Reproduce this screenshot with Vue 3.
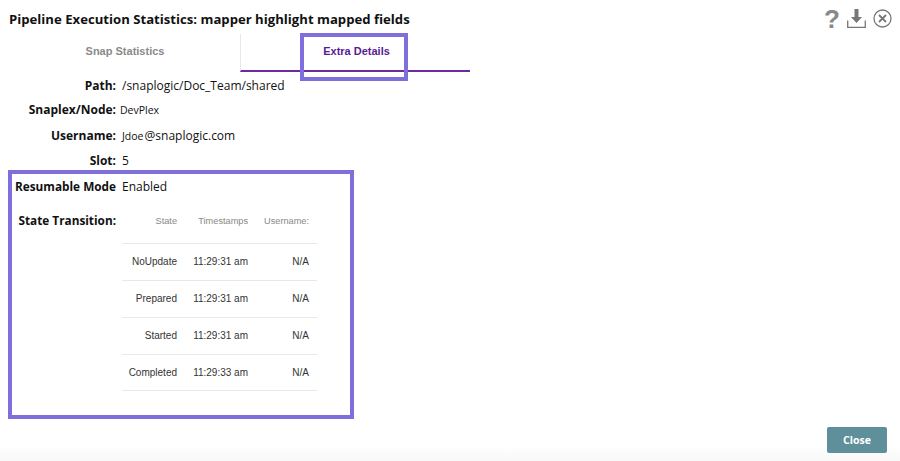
<template>
  <div class="dialog">
    <h1 class="title">Pipeline Execution Statistics: mapper highlight mapped fields</h1>

    <div class="actions">
      <span class="help">?</span>
      <svg class="icon" width="19" height="19" viewBox="0 0 19 19">
        <path d="M7.500 0h4v8h3.500L9.500 14 4 8h3.500z" fill="#777" />
        <path d="M.7 11.500v6.800h17.600v-6.800" fill="none" stroke="#777" stroke-width="1.300" />
      </svg>
      <svg class="icon" width="19" height="19" viewBox="0 0 19 19">
        <circle cx="9.500" cy="9.500" r="8.500" fill="none" stroke="#777" stroke-width="1.300" />
        <path d="M6 6l7 7M13 6l-7 7" fill="none" stroke="#777" stroke-width="1.800" />
      </svg>
    </div>

    <div class="tabs">
      <div class="tab">Snap Statistics</div>
      <div class="tab active">Extra Details</div>
      <div class="tab-mark"></div>
    </div>

    <div class="rows">
      <div class="row path">
        <span class="label">Path:</span>
        <span class="value">/snaplogic/Doc_Team/shared</span>
      </div>
      <div class="row">
        <span class="label">Snaplex/Node:</span>
        <span class="value small">DevPlex</span>
      </div>
      <div class="row">
        <span class="label">Username:</span>
        <span class="value"><span class="jdoe">Jdoe</span> @snaplogic.com</span>
      </div>
      <div class="row">
        <span class="label">Slot:</span>
        <span class="value">5</span>
      </div>
    </div>

    <section class="resume">
      <div class="row mode">
        <span class="label">Resumable Mode</span>
        <span class="value">Enabled</span>
      </div>
      <div class="row transition">
        <span class="label">State Transition:</span>
        <table class="states">
          <thead>
            <tr>
              <th class="c1">State</th>
              <th class="c2">Timestamps</th>
              <th class="c3">Username:</th>
            </tr>
          </thead>
          <tbody>
            <tr v-for="s in states" :key="s.state">
              <td class="c1">{{ s.state }}</td>
              <td class="c2">{{ s.time }}</td>
              <td class="c3">N/A</td>
            </tr>
          </tbody>
        </table>
      </div>
    </section>

    <div class="footer">
      <button class="close">Close</button>
    </div>
  </div>
</template>

<script setup>
const states = [
  { state: 'NoUpdate', time: '11:29:31 am' },
  { state: 'Prepared', time: '11:29:31 am' },
  { state: 'Started', time: '11:29:31 am' },
  { state: 'Completed', time: '11:29:33 am' }
]
</script>

<style>
html, body { background: #fff; }
</style>

<style scoped>
.dialog {
  position: relative;
  width: 900px;
  height: 461px;
  overflow: hidden;
  background: linear-gradient(to bottom, #fff 445px, #f8f8f8 461px);
  font-family: "Open Sans", sans-serif;
  color: #111;
}

.title {
  margin: 0;
  padding: 10px 0 0 9px;
  height: 24px;
  box-sizing: border-box;
  font-size: 13.15px;
  line-height: 18px;
  font-weight: 700;
}

.actions {
  position: absolute;
  top: 9px;
  left: 824px;
  display: flex;
  align-items: flex-start;
}

.help {
  width: 23px;
  font-family: "Liberation Sans", sans-serif;
  font-size: 26px;
  line-height: 20px;
  font-weight: 700;
  color: #888;
}

.icon + .icon {
  margin-left: 7px;
}

.tabs {
  position: relative;
  display: flex;
  width: 470px;
  height: 38px;
  margin-top: 10px;
  font-family: "Liberation Sans", sans-serif;
  font-size: 11px;
  font-weight: 700;
}

.tab {
  width: 240px;
  line-height: 35px;
  text-align: center;
  color: #8a8a8a;
  box-sizing: border-box;
  padding-left: 10px;
}

.tab.active {
  width: 230px;
  color: #5a1a96;
  border-left: 1px solid #e8e8e8;
  border-bottom: 2px solid #6a2aa0;
  padding-left: 2px;
}

.tab-mark {
  position: absolute;
  left: 300px;
  top: -1px;
  width: 100px;
  height: 40px;
  border: 4px solid #7f6fdc;
}

.row {
  display: flex;
  align-items: center;
  height: 25.3px;
  font-size: 12px;
}

.row.path {
  box-sizing: border-box;
  padding-top: 2px;
}

.label {
  width: 116px;
  flex: none;
  text-align: right;
  font-weight: 700;
  margin-right: 6px;
  white-space: nowrap;
}

.value.small {
  font-size: 10.5px;
  margin-left: -2px;
}

.jdoe {
  font-size: 10.5px;
  margin-right: -2px;
}

.resume {
  width: 346px;
  height: 249px;
  margin: -3px 0 0 8px;
  box-sizing: border-box;
  border: 4px solid #7f6fdc;
  padding-top: 1px;
}

.resume .label {
  width: 104px;
  font-size: 11.8px;
}

.resume .mode {
  height: 22px;
}

.resume .transition {
  align-items: flex-start;
  margin-top: 10px;
}

.resume .transition .label {
  line-height: 18px;
  padding-top: 4px;
}

.states {
  border-collapse: collapse;
  width: 195px;
  font-family: "Liberation Sans", sans-serif;
  font-size: 10px;
  color: #333;
}

.states th {
  height: 28px;
  padding: 0 0 8px;
  font-size: 9.2px;
  font-weight: 400;
  color: #888;
  border-bottom: 1px solid #e8e8e8;
  text-align: right;
}

.states td {
  height: 37px;
  padding: 0 0 1px;
  box-sizing: border-box;
  text-align: right;
  border-bottom: 1px solid #e8e8e8;
}

.states tbody tr:last-child td {
  height: 36px;
}

.c1 { width: 55px; }
.c2 { width: 71px; }
.c3 { width: 61px; padding-right: 8px !important; }

.footer {
  position: absolute;
  right: 13px;
  bottom: 8px;
}

.close {
  width: 60px;
  height: 26px;
  border: 0;
  border-radius: 2px;
  background: #5f8f9b;
  color: #fff;
  font-family: "Open Sans", sans-serif;
  font-size: 10.5px;
  font-weight: 700;
}
</style>
